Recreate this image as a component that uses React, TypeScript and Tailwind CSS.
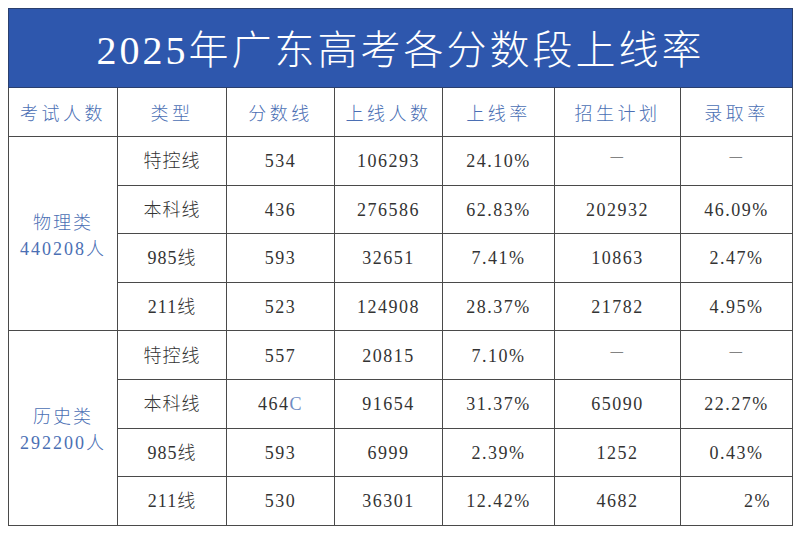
import React from "react";

type Row = { type: string; score: React.ReactNode; count: string; rate: string; plan: string; admit: React.ReactNode };

const wuli: Row[] = [
  { type: "特控线", score: "534", count: "106293", rate: "24.10%", plan: "一", admit: "一" },
  { type: "本科线", score: "436", count: "276586", rate: "62.83%", plan: "202932", admit: "46.09%" },
  { type: "985线", score: "593", count: "32651", rate: "7.41%", plan: "10863", admit: "2.47%" },
  { type: "211线", score: "523", count: "124908", rate: "28.37%", plan: "21782", admit: "4.95%" },
];

const lishi: Row[] = [
  { type: "特控线", score: "557", count: "20815", rate: "7.10%", plan: "一", admit: "一" },
  {
    type: "本科线",
    score: (
      <>
        464<span className="text-[#6f8cc4]">C</span>
      </>
    ),
    count: "91654",
    rate: "31.37%",
    plan: "65090",
    admit: "22.27%",
  },
  { type: "985线", score: "593", count: "6999", rate: "2.39%", plan: "1252", admit: "0.43%" },
  { type: "211线", score: "530", count: "36301", rate: "12.42%", plan: "4682", admit: <span className="pl-[42px]">2%</span> },
];

const headers = ["考试人数", "类型", "分数线", "上线人数", "上线率", "招生计划", "录取率"];

const font = { fontFamily: '"Liberation Serif", "Noto Sans CJK SC", serif' };

const cell = "border border-[#4a4a4a] text-center align-middle p-0";

function Group({ label, total, rows }: { label: string; total: string; rows: Row[] }) {
  return (
    <>
      {rows.map((r, i) => (
        <tr key={i} className="h-[48.6px] text-[18px] text-[#333] font-light">
          {i === 0 && (
            <td rowSpan={4} className={`${cell} text-[#4b6fb4] tracking-[2px] leading-[26px] pt-1`}>
              <div>{label}</div>
              <div>{total}</div>
            </td>
          )}
          <td className={`${cell} tracking-[1px] pt-0.5`}>{r.type}</td>
          <td className={`${cell} tracking-[1.5px] pt-0.5`}>{r.score}</td>
          <td className={`${cell} tracking-[1.5px] pt-0.5`}>{r.count}</td>
          <td className={`${cell} tracking-[1.5px] pt-0.5`}>{r.rate}</td>
          <td className={`${cell} tracking-[1.5px] ${r.plan === "一" ? "text-[#666] text-[14px] pb-1" : "pt-0.5"}`}>{r.plan}</td>
          <td className={`${cell} tracking-[1.5px] ${r.admit === "一" ? "text-[#666] text-[14px] pb-1" : "pt-0.5"}`}>{r.admit}</td>
        </tr>
      ))}
    </>
  );
}

export default function App() {
  return (
    <div className="w-[800px] h-[534px] bg-white pt-2 pl-2" style={font}>
      <table className="border-collapse table-fixed w-[784px]">
        <colgroup>
          <col className="w-[109px]" />
          <col className="w-[109px]" />
          <col className="w-[108px]" />
          <col className="w-[108px]" />
          <col className="w-[112px]" />
          <col className="w-[126px]" />
          <col className="w-[112px]" />
        </colgroup>
        <thead>
          <tr className="h-[79px]">
            <th
              colSpan={7}
              className="border border-[#2a3f6e] bg-[#2e57ad] text-white text-[40px] font-light tracking-[3px] text-center align-middle pt-1.5"
            >
              <span className="font-['Liberation_Serif'] font-normal">2025</span>年广东高考各分数段上线率
            </th>
          </tr>
          <tr className="h-[49px]">
            {headers.map((h) => (
              <th key={h} className={`${cell} text-[#4b6fb4] text-[18px] font-light tracking-[3.5px] pt-1`}>
                {h}
              </th>
            ))}
          </tr>
        </thead>
        <tbody>
          <Group label="物理类" total="440208人" rows={wuli} />
          <Group label="历史类" total="292200人" rows={lishi} />
        </tbody>
      </table>
    </div>
  );
}
